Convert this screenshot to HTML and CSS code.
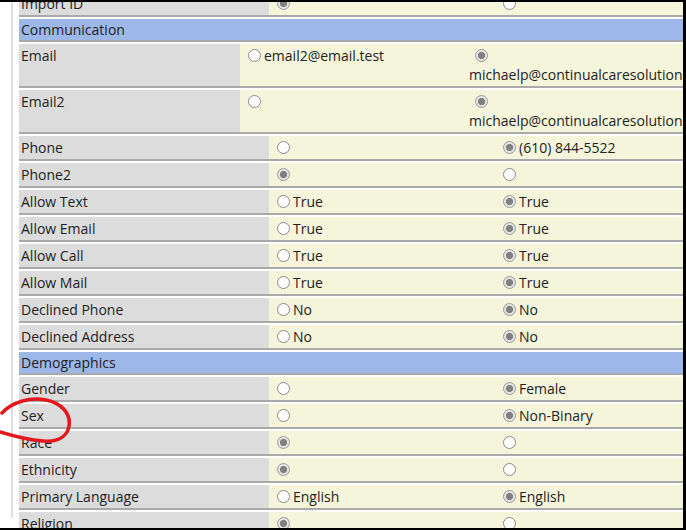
FILE: index.html
```html
<!DOCTYPE html>
<html lang="en">
<head>
    <meta charset="UTF-8">
    <title>Merge Contacts</title>
    <link rel="stylesheet" href="styles.css">
</head>
<body>
<div class="frame">
  <div class="panel">
    <div class="compare">

      <div class="row">
        <div class="label">Import ID</div>
        <div class="opt"><input type="radio" name="importid" checked disabled></div>
        <div class="opt"><input type="radio" name="importid" disabled></div>
      </div>

      <div class="row section"><div class="label">Communication</div></div>

      <div class="row tall">
        <div class="label">Email</div>
        <div class="opt"><div class="line"><input type="radio" name="email" disabled>email2@email.test</div></div>
        <div class="opt"><div class="line"><input type="radio" name="email" checked disabled></div><div class="line">michaelp@continualcaresolutions.com</div></div>
      </div>
      <div class="row tall">
        <div class="label">Email2</div>
        <div class="opt"><div class="line"><input type="radio" name="email2" disabled></div></div>
        <div class="opt"><div class="line"><input type="radio" name="email2" checked disabled></div><div class="line">michaelp@continualcaresolutions.com</div></div>
      </div>

      <div class="row">
        <div class="label">Phone</div>
        <div class="opt"><input type="radio" name="phone" disabled></div>
        <div class="opt"><input type="radio" name="phone" checked disabled>(610) 844-5522</div>
      </div>
      <div class="row">
        <div class="label">Phone2</div>
        <div class="opt"><input type="radio" name="phone2" checked disabled></div>
        <div class="opt"><input type="radio" name="phone2" disabled></div>
      </div>
      <div class="row">
        <div class="label">Allow Text</div>
        <div class="opt"><input type="radio" name="allowtext" disabled>True</div>
        <div class="opt"><input type="radio" name="allowtext" checked disabled>True</div>
      </div>
      <div class="row">
        <div class="label">Allow Email</div>
        <div class="opt"><input type="radio" name="allowemail" disabled>True</div>
        <div class="opt"><input type="radio" name="allowemail" checked disabled>True</div>
      </div>
      <div class="row">
        <div class="label">Allow Call</div>
        <div class="opt"><input type="radio" name="allowcall" disabled>True</div>
        <div class="opt"><input type="radio" name="allowcall" checked disabled>True</div>
      </div>
      <div class="row">
        <div class="label">Allow Mail</div>
        <div class="opt"><input type="radio" name="allowmail" disabled>True</div>
        <div class="opt"><input type="radio" name="allowmail" checked disabled>True</div>
      </div>
      <div class="row">
        <div class="label">Declined Phone</div>
        <div class="opt"><input type="radio" name="declphone" disabled>No</div>
        <div class="opt"><input type="radio" name="declphone" checked disabled>No</div>
      </div>
      <div class="row">
        <div class="label">Declined Address</div>
        <div class="opt"><input type="radio" name="decladdr" disabled>No</div>
        <div class="opt"><input type="radio" name="decladdr" checked disabled>No</div>
      </div>

      <div class="row section"><div class="label">Demographics</div></div>

      <div class="row">
        <div class="label">Gender</div>
        <div class="opt"><input type="radio" name="gender" disabled></div>
        <div class="opt"><input type="radio" name="gender" checked disabled>Female</div>
      </div>
      <div class="row">
        <div class="label">Sex</div>
        <div class="opt"><input type="radio" name="sex" disabled></div>
        <div class="opt"><input type="radio" name="sex" checked disabled>Non-Binary</div>
      </div>
      <div class="row">
        <div class="label">Race</div>
        <div class="opt"><input type="radio" name="race" checked disabled></div>
        <div class="opt"><input type="radio" name="race" disabled></div>
      </div>
      <div class="row">
        <div class="label">Ethnicity</div>
        <div class="opt"><input type="radio" name="ethnicity" checked disabled></div>
        <div class="opt"><input type="radio" name="ethnicity" disabled></div>
      </div>
      <div class="row">
        <div class="label">Primary Language</div>
        <div class="opt"><input type="radio" name="language" disabled>English</div>
        <div class="opt"><input type="radio" name="language" checked disabled>English</div>
      </div>
      <div class="row">
        <div class="label">Religion</div>
        <div class="opt"><input type="radio" name="religion" checked disabled></div>
        <div class="opt"><input type="radio" name="religion" disabled></div>
      </div>

    </div>
  </div>

  <!-- hand-drawn markup around "Sex" -->
  <svg class="scribble" width="80" height="60" viewBox="0 0 80 60">
    <path d="M2,16 C12,5 30,0 46,3 C61,6 71,16 69,29 C67,41 56,45 43,44 C29,43 13,39 0,35" />
  </svg>
</div>
</body>
</html>
```

FILE: styles.css
```css
* {
    box-sizing: border-box;
}
body {
    margin: 0;
    font-family: "Open Sans", "Noto Sans", sans-serif;
    font-size: 14px;
    color: #222;
    background-color: #fff;
}
.frame {
    position: relative;
    width: 686px;
    height: 530px;
    border-top: 2px solid #000;
    border-right: 3px solid #000;
    border-bottom: 2px solid #000;
    padding-left: 11px;
    overflow: hidden;
}
.panel {
    height: 100%;
    border-left: 2px solid #d9dee8;
    padding-left: 6px;
}
.compare {
    margin-top: -10px;
    width: 900px;
}
.row {
    display: flex;
    height: 25px;
    margin-bottom: 2px;
    border-bottom: 2px solid #a9a9a9;
    background-color: #f5f5dc;
}
.label {
    width: 250px;
    flex-shrink: 0;
    display: flex;
    align-items: center;
    padding: 0 2px;
    background-color: #dcdcdc;
    white-space: nowrap;
}
.opt {
    width: 226px;
    flex-shrink: 0;
    display: flex;
    align-items: center;
    padding: 0 2px;
    white-space: nowrap;
}
.section {
    height: 23px;
    background-color: #9db8e8;
}
.section .label {
    width: 100%;
    background-color: transparent;
}

/* the two email rows use a narrower label column */
.tall {
    height: 44px;
}
.tall .label {
    width: 221px;
    align-items: flex-start;
    padding-top: 2px;
    line-height: 19px;
}
.tall .opt {
    width: 227px;
    display: block;
    padding-top: 2px;
}
.tall .line {
    display: flex;
    align-items: center;
    height: 19px;
}

input[type="radio"] {
    appearance: none;
    -webkit-appearance: none;
    width: 13px;
    height: 13px;
    margin: 0 3px 0 6px;
    border: 1px solid #8a8a8a;
    border-radius: 50%;
    background-color: #fff;
    flex-shrink: 0;
}
input[type="radio"]:checked {
    border-color: #9a9a9a;
    background: radial-gradient(circle, #808080 0, #808080 3.3px, #e4e4e4 3.9px);
}

.scribble {
    position: absolute;
    left: 0;
    top: 395px;
}
.scribble path {
    fill: none;
    stroke: #e5161d;
    stroke-width: 3.5;
    stroke-linecap: round;
}
```
